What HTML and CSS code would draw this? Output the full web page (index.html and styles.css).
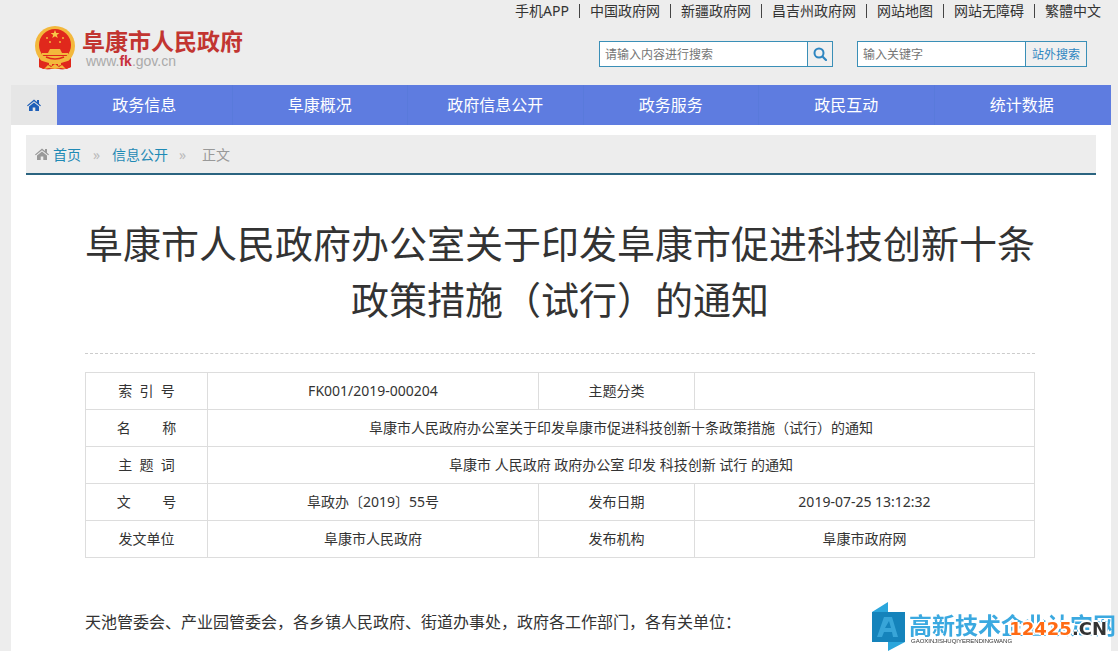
FILE: index.html
```html
<!DOCTYPE html>
<html lang="zh-CN">
<head>
    <meta charset="UTF-8">
    <meta name="viewport" content="width=device-width, initial-scale=1.0">
    <title>阜康市人民政府</title>
    <link rel="stylesheet" href="styles.css">
</head>
<body>
    <!-- header -->
    <header class="header">
        <a class="logo" href="#">
            <svg class="emblem" viewBox="0 0 42 46" aria-hidden="true">
                <path d="M5 31L5 42Q12 45 17 44L25 44Q31 45 37 42L37 31Z" fill="#d8261c"/>
                <circle cx="21" cy="21" r="20" fill="#f3b83c"/>
                <circle cx="21" cy="20" r="16" fill="#e0281c"/>
                <path d="M21 5l1.2 3h3.2l-2.6 2 1 3.100-2.800-1.900-2.800 1.900 1-3.100-2.600-2h3.200z" fill="#f7c948"/>
                <g fill="#f3b83c">
                    <circle cx="13" cy="13" r="1"/><circle cx="16" cy="17" r="1"/>
                    <circle cx="26" cy="17" r="1"/><circle cx="29" cy="13" r="1"/>
                    <path d="M14 28l2-4h10l2 4h6v2H8v-2z"/>
                    <path d="M6 31h30l-3 5-12 2-12-2z"/>
                </g>
                <path d="M12 32q9 4 18 0" stroke="#e0281c" stroke-width="1.500" fill="none"/>
                <path d="M5 35l10 3v6q-5 1-10-2zM37 35l-10 3v6q5 1 10-2zM18 39h6v2h-6z" fill="#e0281c"/>
                <path d="M10 44l4-4 3 2 4-3 4 3 3-2 4 4-5-1-6 1-6-1z" fill="#f3b83c"/>
            </svg>
            <span class="logo-text">
                <span class="logo-name">阜康市人民政府</span>
                <span class="logo-url">www.<b>fk</b>.gov.cn</span>
            </span>
        </a>
        <div class="header-right">
            <ul class="top-links">
                <li><a href="#">手机APP</a></li>
                <li><a href="#">中国政府网</a></li>
                <li><a href="#">新疆政府网</a></li>
                <li><a href="#">昌吉州政府网</a></li>
                <li><a href="#">网站地图</a></li>
                <li><a href="#">网站无障碍</a></li>
                <li><a href="#">繁體中文</a></li>
            </ul>
            <div class="searches">
                <form class="search">
                    <input class="search-main" type="text" placeholder="请输入内容进行搜索" aria-label="站内搜索">
                    <button class="search-icon" type="button" aria-label="搜索">
                        <svg width="14" height="14" viewBox="0 0 14 14"><circle cx="6" cy="6" r="4.500" fill="none" stroke="#2e86c1" stroke-width="2"/><path d="M9.500 9.500l3.500 3.500" stroke="#2e86c1" stroke-width="2.200" stroke-linecap="round"/></svg>
                    </button>
                </form>
                <form class="search">
                    <input class="search-out" type="text" placeholder="输入关键字" aria-label="关键字">
                    <button class="search-text" type="button">站外搜索</button>
                </form>
            </div>
        </div>
    </header>

    <!-- nav -->
    <nav class="nav">
        <a class="nav-home" href="#" aria-label="首页">
            <svg width="14" height="12" viewBox="0 0 14 12" fill="#1f5fb8"><path d="M7 0.500l3 2.500V1h2v3.700l2 1.700-.8.900L7 2.200.8 7.300 0 6.400z"/><path d="M7 3.500l5 4V12H8.300V8.500H5.700V12H2V7.500z"/></svg>
        </a>
        <a href="#">政务信息</a>
        <a href="#">阜康概况</a>
        <a href="#">政府信息公开</a>
        <a href="#">政务服务</a>
        <a href="#">政民互动</a>
        <a href="#">统计数据</a>
    </nav>

    <main class="main">
        <div class="crumbs">
            <svg width="14" height="12" viewBox="0 0 14 12" fill="#999"><path d="M7 0.500l3 2.500V1h2v3.700l2 1.700-.8.900L7 2.200.8 7.300 0 6.400z"/><path d="M7 3.500l5 4V12H8.300V8.500H5.700V12H2V7.500z"/></svg>
            <a href="#">首页</a>
            <span class="sep">»</span>
            <a href="#">信息公开</a>
            <span class="sep">»</span>
            <span>正文</span>
        </div>

        <article class="article">
            <h1>阜康市人民政府办公室关于印发阜康市促进科技创新十条政策措施（试行）的通知</h1>
            <table class="info">
                <colgroup>
                    <col class="col-label"><col class="col-value"><col class="col-label2"><col>
                </colgroup>
                <tr>
                    <th>索&nbsp;&nbsp;引&nbsp;&nbsp;号</th>
                    <td>FK001/2019-000204</td>
                    <th>主题分类</th>
                    <td></td>
                </tr>
                <tr>
                    <th>名&emsp;&emsp;&nbsp;称</th>
                    <td colspan="3">阜康市人民政府办公室关于印发阜康市促进科技创新十条政策措施（试行）的通知</td>
                </tr>
                <tr>
                    <th>主&nbsp;&nbsp;题&nbsp;&nbsp;词</th>
                    <td colspan="3">阜康市 人民政府 政府办公室 印发 科技创新 试行 的通知</td>
                </tr>
                <tr>
                    <th>文&emsp;&emsp;&nbsp;号</th>
                    <td>阜政办〔2019〕55号</td>
                    <th>发布日期</th>
                    <td>2019-07-25 13:12:32</td>
                </tr>
                <tr>
                    <th>发文单位</th>
                    <td>阜康市人民政府</td>
                    <th>发布机构</th>
                    <td>阜康市政府网</td>
                </tr>
            </table>
            <p>天池管委会、产业园管委会，各乡镇人民政府、街道办事处，政府各工作部门，各有关单位：</p>
        </article>
    </main>

    <!-- watermark -->
    <div class="mark">
        <svg width="38" height="50" viewBox="0 0 38 50" aria-hidden="true">
            <path d="M1 11L17 1v10zM17 41h17L17 50z" fill="#2ba6dc"/>
            <path d="M1 11h33v30H1z" fill="#1583bb"/>
            <path d="M6 36l7-20h8l6 20h-5l-1-5h-8l-2 5zM14 27h6l-2-7z" fill="#38a5d8" fill-rule="evenodd"/>
        </svg>
        <div class="mark-text">
            <span class="mark-name">高新技术企业认定网</span>
            <span class="mark-sub">GAOXINJISHUQIYERENDINGWANG</span>
        </div>
        <span class="mark-site"><b>12425</b>.CN</span>
    </div>
</body>
</html>
```

FILE: styles.css
```css
* {
    box-sizing: border-box;
}
body {
    margin: 0;
    padding: 0 7px 0 11px;
    min-height: 100vh;
    display: flex;
    flex-direction: column;
    background: #ededed;
    color: #333;
    font-family: "Noto Sans", "Noto Sans CJK SC", sans-serif;
    font-size: 14px;
}
a {
    color: inherit;
    text-decoration: none;
}

/* header */
.header {
    display: flex;
    justify-content: space-between;
    height: 85px;
}
.logo {
    display: flex;
    gap: 6px;
    padding: 25px 0 0 23px;
}
.emblem {
    width: 42px;
    height: 46px;
}
.logo-text {
    display: flex;
    flex-direction: column;
}
.logo-name {
    font-size: 23px;
    line-height: 32px;
    font-weight: bold;
    color: #c23531;
}
.logo-url {
    padding-left: 4px;
    margin-top: -4px;
    font: 14px/16px "Liberation Sans", sans-serif;
    color: #aaa;
}
.logo-url b {
    color: #c8323c;
}
.header-right {
    display: flex;
    flex-direction: column;
    align-items: flex-end;
}
.top-links {
    display: flex;
    margin: 0;
    padding: 0 10px 0 0;
    list-style: none;
    line-height: 22px;
}
.top-links li {
    display: flex;
    align-items: center;
}
.top-links li + li::before {
    content: "";
    width: 1px;
    height: 14px;
    margin: 0 10px;
    background: #444;
}
.searches {
    display: flex;
    gap: 24px;
    padding: 19px 24px 0 0;
}
.search {
    display: flex;
    height: 26px;
}
.search input,
.search button {
    border: 1px solid #3a8fb7;
    font-family: inherit;
    font-size: 12px;
}
.search input {
    padding: 0 5px;
    background: #fff;
    outline: none;
}
.search input::placeholder {
    color: #757575;
}
.search button {
    margin-left: -1px;
    padding: 0;
    background: #f0f0f0;
    color: #2e86c1;
}
.search-main {
    width: 209px;
}
.search-out {
    width: 169px;
}
.search .search-icon {
    display: flex;
    align-items: center;
    justify-content: center;
    width: 26px;
}
.search-text {
    width: 62px;
}

/* nav */
.nav {
    display: flex;
    height: 40px;
    padding-right: 2px;
    background: #5e7ce0;
    color: #fff;
    font-size: 16px;
    line-height: 40px;
    text-align: center;
}
.nav a {
    flex: 1;
    border-right: 1px solid #597adb;
}
.nav a:last-child {
    border-right: 0;
}
.nav .nav-home {
    flex: none;
    display: flex;
    align-items: center;
    justify-content: center;
    width: 46px;
    border-right: 0;
    background: #e6e6e6;
}

/* content */
.main {
    flex: 1;
    padding: 10px 15px 0;
    background: #fff;
}
.crumbs {
    display: flex;
    align-items: center;
    height: 40px;
    padding-left: 9px;
    background: #ededed;
    border-bottom: 2px solid #2b6480;
    color: #999;
}
.crumbs svg {
    margin-right: 4px;
}
.crumbs a {
    color: #1f8ab5;
}
.sep {
    width: 31px;
    text-align: center;
    color: #bbb;
}
.sep:nth-last-child(2) {
    width: 34px;
    padding-right: 5px;
}
.article {
    padding: 40px 61px 0 59px;
}
h1 {
    margin: 0;
    padding-bottom: 26px;
    border-bottom: 1px dashed #ccc;
    font-size: 38px;
    line-height: 56px;
    font-weight: normal;
    text-align: center;
}
.info {
    width: 100%;
    margin-top: 18px;
    border-collapse: collapse;
    table-layout: fixed;
}
.info th,
.info td {
    height: 37px;
    padding: 0;
    border: 1px solid #ddd;
    font-weight: normal;
    text-align: center;
    line-height: 20px;
}
.col-label {
    width: 122px;
}
.col-value {
    width: 331px;
}
.col-label2 {
    width: 156px;
}
.article p {
    margin: 48px 0 0;
    font-size: 16px;
    line-height: 32px;
}

/* watermark */
.mark {
    position: fixed;
    right: 2px;
    bottom: 0;
    display: flex;
}
.mark-text {
    display: flex;
    flex-direction: column;
    padding-top: 11px;
}
.mark-name {
    font-size: 23px;
    line-height: 26px;
    font-weight: bold;
    color: #3ba9e0;
}
.mark-sub {
    padding-left: 2px;
    font: 6px/6px "Liberation Sans", sans-serif;
}
.mark-site {
    position: absolute;
    right: 9px;
    top: 17px;
    font: bold 18px/22px "DejaVu Sans", sans-serif;
    color: #333;
    text-shadow: 2px 0 #fff, -2px 0 #fff, 0 2px #fff, 0 -2px #fff;
}
.mark-site b {
    color: #ff6a13;
}
```
